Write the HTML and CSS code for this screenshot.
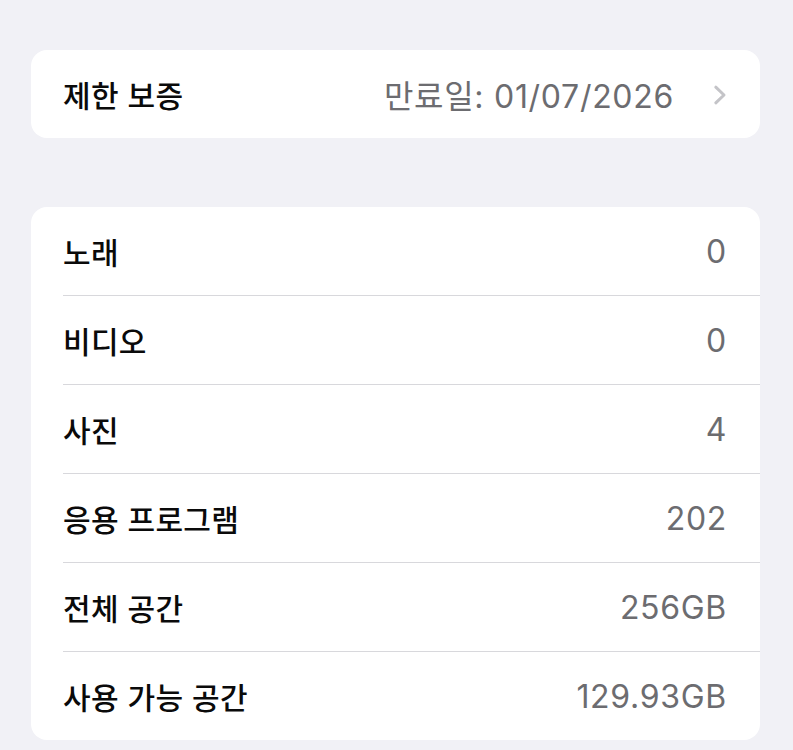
FILE: index.html
```html
<!DOCTYPE html>
<html lang="ko">
<head>
<meta charset="utf-8">
<link rel="stylesheet" href="styles.css">
</head>
<body>
<div class="page">
  <div class="card">
    <div class="row">
      <div class="row-inner">
        <span class="label">제한 보증</span>
        <span class="value-wrap">
          <span class="value">만료일: 01/07/2026</span>
          <svg class="chev" width="14" height="20" viewBox="0 0 14 20"><path d="M2.8 2.2 L11 10 L2.8 17.8" fill="none" stroke="#c4c4c8" stroke-width="3" stroke-linecap="round" stroke-linejoin="round"/></svg>
        </span>
      </div>
    </div>
  </div>

  <div class="card">
    <div class="row"><div class="row-inner sep"><span class="label">노래</span><span class="value">0</span></div></div>
    <div class="row"><div class="row-inner sep"><span class="label">비디오</span><span class="value">0</span></div></div>
    <div class="row"><div class="row-inner sep"><span class="label">사진</span><span class="value">4</span></div></div>
    <div class="row"><div class="row-inner sep"><span class="label">응용 프로그램</span><span class="value">202</span></div></div>
    <div class="row"><div class="row-inner sep"><span class="label">전체 공간</span><span class="value">256GB</span></div></div>
    <div class="row"><div class="row-inner"><span class="label">사용 가능 공간</span><span class="value">129.93GB</span></div></div>
  </div>
</div>
</body>
</html>
```
FILE: styles.css
```css
html, body {
  margin: 0;
  padding: 0;
  background: #f1f1f6;
}
body {
  font-family: "Noto Sans CJK KR", "Noto Sans", "Liberation Sans", sans-serif;
  -webkit-font-smoothing: antialiased;
}
.page {
  padding: 50px 33px 0 31px;
  display: flex;
  flex-direction: column;
  gap: 69px;
}
.card {
  background: #ffffff;
  border-radius: 16px;
  overflow: hidden;
}
.row {
  padding-left: 32px;
}
.row-inner {
  height: 88px;
  display: flex;
  align-items: center;
  justify-content: space-between;
  padding-right: 33px;
}
.row-inner.sep {
  border-bottom: 1px solid #d8d8dc;
}
.label {
  font-size: 30px;
  font-weight: 500;
  color: #0a0a0a;
  letter-spacing: 0.3px;
}
.value {
  font-size: 32px;
  font-weight: 400;
  color: #6c6c70;
  letter-spacing: 0.7px;
  font-family: "Inter", "Noto Sans CJK KR", sans-serif;
}
.value-wrap {
  display: flex;
  align-items: center;
  gap: 39px;
}
.chev {
  display: block;
  margin-top: 1px;
}
```
